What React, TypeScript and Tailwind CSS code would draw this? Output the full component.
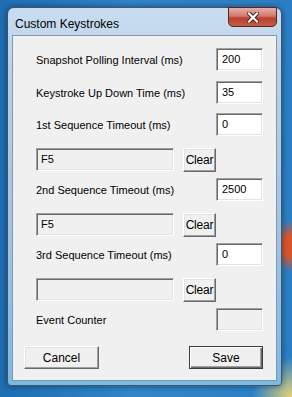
const sunken =
  "border border-t-[#a0a0a0] border-l-[#a0a0a0] border-r-white border-b-white shadow-[inset_1px_1px_0_#696969,inset_-1px_-1px_0_#e3e3e3]";
const raised =
  "border border-t-white border-l-white border-r-[#696969] border-b-[#696969] shadow-[inset_-1px_-1px_0_#a0a0a0,inset_1px_1px_0_#e3e3e3] bg-[#f0f0f0]";

function NumberRow({ label, value, mt }: { label: string; value: string; mt: string }) {
  return (
    <div className={`flex h-[23px] items-center justify-between pl-[23px] pr-[13px] ${mt}`}>
      <span className="pt-[1px]">{label}</span>
      <div className={`h-[23px] w-[47px] bg-white pl-[5px] pt-[3px] leading-[14px] ${sunken}`}>{value}</div>
    </div>
  );
}

function KeyRow({ value, mt }: { value: string; mt: string }) {
  return (
    <div className={`flex h-[23px] items-center gap-[9px] pl-[23px] ${mt}`}>
      <div className={`h-[23px] w-[138px] bg-[#f0f0f0] pl-[4px] pt-[3px] leading-[14px] ${sunken}`}>{value}</div>
      <button className={`h-[24px] w-[33px] text-[12px] tracking-[-0.2px] ${raised}`}>Clear</button>
    </div>
  );
}

export default function App() {
  return (
    <div
      className="h-[397px] w-[292px] overflow-hidden bg-[radial-gradient(circle_at_100%_62%,#d8552b_0,#d8552b_10px,transparent_26px),radial-gradient(circle_at_100%_100%,#e8d37a_0,transparent_40px),linear-gradient(90deg,#1f6db3_0%,#2f86c9_45%,#2a7fc4_100%)] pl-[7px] pt-[7px]"
      style={{ fontFamily: '"Liberation Sans", Arial, sans-serif' }}
    >
      <div className="flex h-[379px] w-[275px] flex-col rounded-t-[7px] rounded-b-[4px] border border-[#3f5670] bg-[linear-gradient(180deg,#c9ddef_0%,#b6cfe7_20%,#a2c3e2_60%,#78bbe3_100%)] shadow-[0_0_6px_rgba(0,0,0,0.45)]">
        <div className="flex h-[27px] items-start justify-between pl-[7px] pr-[4px]">
          <span className="self-center pt-[4px] text-[12px] text-black">Custom Keystrokes</span>
          <div className="-mt-[1px] flex h-[20px] w-[49px] items-center justify-center rounded-b-[5px] border border-[#5a2420] bg-[linear-gradient(180deg,#e6aea4_0%,#d27a6c_45%,#b9412f_55%,#c65a42_100%)]">
            <svg width="12" height="11" viewBox="0 0 12 11">
              <path d="M2 1.5 L10 9.5 M10 1.5 L2 9.5" stroke="#4a1c18" strokeWidth="4" strokeLinecap="square" />
              <path d="M2 1.5 L10 9.5 M10 1.5 L2 9.5" stroke="#ffffff" strokeWidth="2.2" strokeLinecap="square" />
            </svg>
          </div>
        </div>
        <div className="mx-[4px] flex h-[346px] flex-col border border-[#8398b0] bg-[#f0f0f0] pt-[12px] text-[11px] text-black">
          <NumberRow label="Snapshot Polling Interval (ms)" value="200" mt="" />
          <NumberRow label="Keystroke Up Down Time (ms)" value="35" mt="mt-[10px]" />
          <NumberRow label="1st Sequence Timeout (ms)" value="0" mt="mt-[9px]" />
          <KeyRow value="F5" mt="mt-[12px]" />
          <NumberRow label="2nd Sequence Timeout (ms)" value="2500" mt="mt-[7px]" />
          <KeyRow value="F5" mt="mt-[12px]" />
          <NumberRow label="3rd Sequence Timeout (ms)" value="0" mt="mt-[7px]" />
          <KeyRow value="" mt="mt-[12px]" />
          <div className="mt-[7px] flex h-[23px] items-center justify-between pl-[23px] pr-[13px]">
            <span className="pt-[1px]">Event Counter</span>
            <div className={`h-[23px] w-[47px] bg-[#f0f0f0] ${sunken}`} />
          </div>
          <div className="mt-[15px] flex h-[23px] items-center justify-between pl-[11px] pr-[13px]">
            <button className={`h-[23px] w-[75px] text-[12px] ${raised}`}>Cancel</button>
            <button className="h-[23px] w-[74px] border border-[#3c3c3c] bg-[#f0f0f0] text-[12px] shadow-[inset_1px_1px_0_#ffffff,inset_-1px_-1px_0_#696969,inset_-2px_-2px_0_#a0a0a0]">
              Save
            </button>
          </div>
        </div>
      </div>
    </div>
  );
}
